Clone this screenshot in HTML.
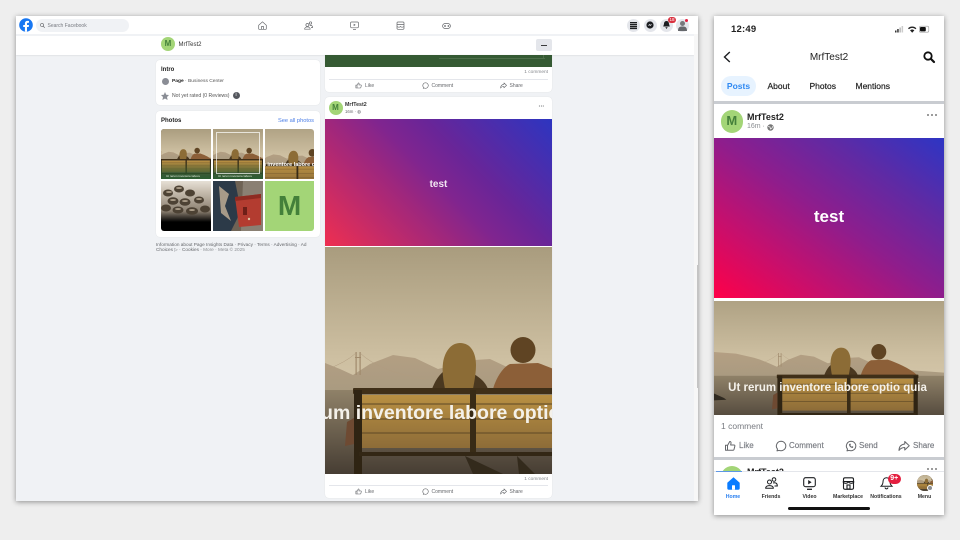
<!DOCTYPE html>
<html><head><meta charset="utf-8"><style>
html,body{margin:0;padding:0}
body{width:960px;height:540px;overflow:hidden;background:#eeeeee;position:relative;font-family:"Liberation Sans",sans-serif}
.a{position:absolute}
#d,#m{position:absolute;left:0;top:0;width:960px;height:540px}
#d{filter:blur(.3px)}
#m{filter:blur(.2px)}
.t{position:absolute;white-space:nowrap;line-height:0}
#d .t{margin-top:.8px}
svg{position:absolute;overflow:visible}
.g{color:#65676b}
.b{font-weight:bold}
.card{position:absolute;background:#fff;border-radius:4px;box-shadow:0 0 1px rgba(0,0,0,.12)}
.av{position:absolute;border-radius:50%;background:#a3d577;color:#44803a;font-weight:bold;text-align:center}
</style></head><body>
<svg width="0" height="0" style="position:absolute"><defs>
<linearGradient id="sky" x1="0" y1="0" x2="0" y2="1"><stop offset="0" stop-color="#a99c7e"/><stop offset=".75" stop-color="#cdbfa1"/><stop offset="1" stop-color="#d3c5a8"/></linearGradient>
<linearGradient id="mt" x1="0" y1="0" x2="0" y2="1"><stop offset="0" stop-color="#b49f83"/><stop offset="1" stop-color="#a89a80"/></linearGradient>
<linearGradient id="gr" x1="0" y1="0" x2="0" y2="1"><stop offset="0" stop-color="#8f8168"/><stop offset="1" stop-color="#463d33"/></linearGradient>
<linearGradient id="sl" x1="0" y1="0" x2="0" y2="1"><stop offset="0" stop-color="#b88f42"/><stop offset="1" stop-color="#8d6c38"/></linearGradient>
<g id="scene">
<rect x="-80" y="0" width="390" height="145" fill="url(#sky)"/>
<path d="M-80 103L-40 106-10 113 0 116 15 122 28 128 45 117 68 108 90 111 113 122 150 113 165 112 182 120 210 127 240 133 310 138V150H-80Z" fill="url(#mt)"/>
<path d="M30.500 105h1.200v23h-1.200zM34.500 105h1.200v23h-1.200zM30 110h6v1h-6z" fill="#a08a6c"/>
<path d="M-40 132Q10 125 31 106M35 106Q55 125 100 132" stroke="#b19c80" stroke-width=".5" fill="none"/>
<rect x="-80" y="143" width="390" height="84" fill="url(#gr)"/>
<path d="M-78 172l18 8 4 3-22 1Z" fill="#2f2920"/>
<path d="M107 142c3-8 7-14 11-17l27 0c8 4 15 9 18 17Z" fill="#4a3820"/>
<path d="M120 142c-2-10-3-18-2-26 2-13 9-20 17-20 11 0 16 10 16 22 0 9-2 18-3 24Z" fill="#8c6c36"/>
<path d="M168 142c3-11 10-22 17-25l28-1c14 5 36 14 49 26Z" fill="#8c5f38"/>
<ellipse cx="198" cy="103" rx="12.500" ry="13" fill="#5f4423"/>
<rect x="28" y="141" width="236" height="6" rx="1" fill="#3f2f18"/>
<rect x="37" y="148" width="108" height="53" fill="url(#sl)"/><rect x="150" y="148" width="106" height="53" fill="url(#sl)"/>
<path d="M37 157h108M150 157h106M37 172h108M150 172h106M37 186h108M150 186h106" stroke="#5d4826" stroke-width="1"/>
<rect x="29" y="143" width="8" height="84" fill="#2f2413"/><rect x="145" y="143" width="6" height="64" fill="#382b16"/><rect x="256" y="143" width="7" height="84" fill="#2f2413"/>
<rect x="34" y="205" width="226" height="4" fill="#332715"/>
<path d="M140 209l38 18h-30ZM192 209l18 18h-16Z" fill="#332a1c"/>
<path d="M22 175l7-4v26l-9 2Z" fill="#6e4a32"/>
</g>
<symbol id="like" viewBox="0 0 24 24" overflow="visible"><path d="M7 10.500v10H3v-10ZM7 11l4.500-8c2 0 3 1.500 2.500 3.500L13.300 10H20c1.300 0 2 1 1.700 2.300l-1.700 6.700c-.3 1-1 1.500-2 1.500H7" fill="none" stroke="currentColor" stroke-width="2" stroke-linejoin="round"/></symbol>
<symbol id="cmt" viewBox="0 0 24 24" overflow="visible"><path d="M12 2.500a9.700 9.500 0 1 1-4 18.200l-4 1 1-3.600A9.500 9.500 0 0 1 12 2.500Z" fill="none" stroke="currentColor" stroke-width="2" stroke-linejoin="round"/></symbol>
<symbol id="shr" viewBox="0 0 24 24" overflow="visible"><path d="M13.500 3l9 8.500-9 8.500v-5C8 15 5 16.500 2 21c0-7 4-12 11.500-13Z" fill="none" stroke="currentColor" stroke-width="2" stroke-linejoin="round"/></symbol>
</defs></svg>

<div id="d">
<!-- desktop window -->
<div class="a" style="left:16px;top:16px;width:682px;height:485px;background:#f0f2f5;box-shadow:0 1px 5px rgba(0,0,0,.4);overflow:hidden"></div>
<div class="a" style="left:16px;top:16px;width:682px;height:18px;background:#fff"></div>
<div class="a" style="left:16px;top:36px;width:678px;height:18.500px;background:#fff;box-shadow:0 1px 1px rgba(0,0,0,.06)"></div>
<div class="a" style="left:694px;top:34px;width:4px;height:467px;background:#f7f7f7"></div>
<div class="a" style="left:696.500px;top:265px;width:1.500px;height:123px;background:#c4c4c4"></div>

<svg style="left:19px;top:18px" width="14" height="14" viewBox="0 0 14 14"><circle cx="7" cy="7" r="6.800" fill="#1877f2"/><path d="M9.700 9l.3-2H8V5.800c0-.6.300-1.100 1.100-1.100h.9V3s-.8-.1-1.500-.1C6.900 2.900 5.900 3.900 5.900 5.500V7H4.200v2h1.700v4.800h2.100V9Z" fill="#fff"/></svg>
<div class="a" style="left:36px;top:19px;width:93px;height:13px;border-radius:7px;background:#f0f2f5"></div>
<svg style="left:40px;top:23px" width="5" height="5" viewBox="0 0 10 10"><circle cx="4" cy="4" r="3.200" fill="none" stroke="#65676b" stroke-width="1.300"/><path d="M6.500 6.500L9.500 9.500" stroke="#65676b" stroke-width="1.300"/></svg>
<div class="t g" style="left:47.500px;top:25px;font-size:5px;color:#777a80">Search Facebook</div>

<!-- top nav icons -->
<svg style="left:258px;top:21px" width="9" height="9" viewBox="0 0 9 9" fill="none" stroke="#65676b" stroke-width=".7"><path d="M.7 4.300L4.500.8l3.800 3.500v3.400a.6.600 0 0 1-.6.600H1.300a.6.600 0 0 1-.6-.6Z"/><path d="M3.400 8.200V5.600h2.200v2.600"/></svg>
<svg style="left:304px;top:21px" width="9" height="9" viewBox="0 0 9 9" fill="none" stroke="#65676b" stroke-width=".7"><circle cx="3.400" cy="4" r="1.500"/><circle cx="6.500" cy="2" r="1.200"/><path d="M.6 8.200c0-3 5.600-3 5.600 0ZM5.800 4.500c1.500-.5 2.900.3 2.800 2H7"/></svg>
<svg style="left:349.500px;top:21px" width="9" height="9" viewBox="0 0 9 9" fill="none" stroke="#65676b" stroke-width=".7"><rect x=".6" y="1" width="7.800" height="5.800" rx="1"/><path d="M3 8.400h3" /><path d="M3.700 2.700l2 1.200-2 1.200Z" fill="#65676b" stroke="none"/></svg>
<svg style="left:395.500px;top:21px" width="9" height="9" viewBox="0 0 9 9" fill="none" stroke="#65676b" stroke-width=".7"><rect x="1" y="1" width="7" height="7.300" rx="1"/><path d="M1 3.500h7M1 5.500c1.500 1 2.500 1 3.500 0 1 1 2 1 3.500 0"/></svg>
<svg style="left:441.500px;top:21.500px" width="9" height="8" viewBox="0 0 9 8" fill="none" stroke="#65676b" stroke-width=".7"><rect x=".6" y="1.500" width="7.800" height="5" rx="2.500"/><path d="M2 4h2M3 3v2"/><circle cx="6.400" cy="4" r=".5" fill="#65676b"/></svg>

<!-- right top circles -->
<div class="a" style="left:627px;top:18.500px;width:13px;height:13px;border-radius:50%;background:#e4e6eb"></div>
<div class="a" style="left:643.500px;top:18.500px;width:13px;height:13px;border-radius:50%;background:#e4e6eb"></div>
<div class="a" style="left:659.500px;top:18.500px;width:13px;height:13px;border-radius:50%;background:#e4e6eb"></div>
<div class="a" style="left:676px;top:18.500px;width:13px;height:13px;border-radius:50%;background:#e4e6eb"></div>
<svg style="left:630px;top:21.500px" width="7" height="7" viewBox="0 0 7 7"><path d="M0 .7h7M0 2.700h7M0 4.700h7M0 6.500h7" stroke="#1c1e21" stroke-width="1.300"/></svg>
<svg style="left:646px;top:21px" width="8" height="8" viewBox="0 0 8 8"><circle cx="4" cy="4" r="3.600" fill="#1c1e21"/><path d="M1.800 5L3.400 3l1 .8L6.200 3 4.500 5l-1-.8Z" fill="#e4e6eb"/></svg>
<svg style="left:662.500px;top:21px" width="7" height="8" viewBox="0 0 7 8"><path d="M3.500 0C1.700 0 1 1.500 1 3L.2 5.500h6.600L6 3C6 1.500 5.300 0 3.500 0ZM2.300 6.300h2.400L3.500 8Z" fill="#1c1e21"/></svg>
<svg style="left:677px;top:19px" width="11" height="13" viewBox="0 0 11 13"><circle cx="5.500" cy="4.500" r="2.500" fill="#77797d"/><path d="M1 12c0-4 1.800-4.500 4.500-4.500S10 8 10 12Z" fill="#66686c"/></svg>
<div class="a" style="left:685px;top:19.200px;width:3px;height:3px;border-radius:50%;background:#e41e3f"></div>
<div class="a" style="left:668px;top:16.800px;width:8px;height:6px;border-radius:3px;background:#d9313f;color:#fff;font-size:4.500px;line-height:6px;text-align:center">18</div>

<!-- page header -->
<div class="av" style="left:161px;top:37px;width:14px;height:14px;font-size:8px;line-height:14px">M</div>
<div class="t" style="left:178.500px;top:44.500px;font-size:6px;color:#333">MrfTest2</div>
<div class="a" style="left:536px;top:39px;width:16px;height:12px;border-radius:2px;background:#e4e6eb"></div>
<div class="a" style="left:541px;top:44.500px;width:6px;height:1.200px;background:#3a3b3c"></div>

<!-- intro -->
<div class="card" style="left:156px;top:60px;width:163.500px;height:45px"></div>
<div class="t b" style="left:161px;top:69px;font-size:6px;color:#222">Intro</div>
<div class="a" style="left:161.500px;top:78px;width:7px;height:7px;border-radius:50%;background:#8a8d95"></div>
<div class="t" style="left:172px;top:81px;font-size:4.900px;color:#555"><b style="color:#222">Page</b> · Business Center</div>
<svg style="left:161px;top:91.500px" width="8" height="8" viewBox="0 0 8 8"><path d="M4 0l1.200 2.700 2.800.3-2 2 .6 3L4 6.500 1.400 8 2 5 0 3l2.800-.3Z" fill="#8a8d95"/></svg>
<div class="t" style="left:172px;top:95.500px;font-size:5.100px;color:#555">Not yet rated (0 Reviews)</div>
<div class="a" style="left:232.500px;top:92px;width:7px;height:7px;border-radius:50%;background:#54575e;color:#fff;font-size:5px;line-height:7px;text-align:center">i</div>

<!-- photos -->
<div class="card" style="left:156px;top:111px;width:163.500px;height:126px"></div>
<div class="t b" style="left:161px;top:120px;font-size:6px;color:#222">Photos</div>
<div class="t" style="right:646px;top:120px;font-size:5.700px;color:#4a7de6">See all photos</div>
<div class="a" style="left:161px;top:129px;width:153px;height:102px;border-radius:3px;overflow:hidden;background:#fff">
 <div class="a" style="left:0;top:0;width:50px;height:50px;overflow:hidden;background:#463d33"><svg style="left:-25.300px;top:-1.200px" width="85.800" height="49.940" viewBox="-80 0 390 227"><use href="#scene"/></svg><div class="a" style="left:0;top:33px;width:50px;height:17px;background:linear-gradient(rgba(50,110,50,0),rgba(40,100,50,.85))"></div><div class="t" style="left:5px;top:46px;font-size:3px;color:#e6efe0">Ut rerum inventore labore</div></div>
 <div class="a" style="left:52px;top:0;width:50px;height:50px;overflow:hidden;background:#463d33"><svg style="left:-25.300px;top:-1.200px" width="85.800" height="49.940" viewBox="-80 0 390 227"><use href="#scene"/></svg><div class="a" style="left:0;top:33px;width:50px;height:17px;background:linear-gradient(rgba(50,110,50,0),rgba(40,100,50,.85))"></div><div class="a" style="left:3px;top:3px;width:44px;height:42px;border:.7px solid rgba(255,255,255,.7);box-sizing:border-box"></div><div class="t" style="left:5px;top:46px;font-size:3px;color:#e6efe0">Ut rerum inventore labore</div></div>
 <div class="a" style="left:103.500px;top:0;width:50px;height:50px;overflow:hidden"><svg style="left:-36px;top:-7px" width="117" height="68.100" viewBox="-80 0 390 227"><use href="#scene"/></svg><div class="t b" style="left:-9px;top:35.500px;font-size:5.500px;color:#fff">rum inventore labore optio</div></div>
 <div class="a" style="left:0;top:51.500px;width:50px;height:50.500px;overflow:hidden;background:linear-gradient(#e6e0d6 0,#c9bfb1 20%,#8d8172 60%,#000 82%)">
  <svg style="left:0;top:0" width="50" height="50" viewBox="0 0 50 50"><g fill="#4d4234"><ellipse cx="7" cy="12" rx="5" ry="3.500"/><ellipse cx="18" cy="8" rx="5" ry="3.500"/><ellipse cx="29" cy="12" rx="5" ry="3.500"/><ellipse cx="12" cy="20" rx="5.500" ry="3.800"/><ellipse cx="24" cy="21" rx="5.500" ry="3.800"/><ellipse cx="38" cy="19" rx="5" ry="3.500"/><ellipse cx="5" cy="27" rx="5" ry="3.500"/><ellipse cx="17" cy="29" rx="5.500" ry="3.500"/><ellipse cx="31" cy="30" rx="6" ry="3.800"/><ellipse cx="44" cy="28" rx="5" ry="3.500"/></g><g fill="#a89a86"><ellipse cx="8" cy="11" rx="3" ry="1"/><ellipse cx="18" cy="7" rx="3" ry="1"/><ellipse cx="12" cy="19" rx="3" ry="1"/><ellipse cx="24" cy="20" rx="3" ry="1"/><ellipse cx="31" cy="29" rx="3" ry="1"/><ellipse cx="17" cy="28" rx="3" ry="1"/><ellipse cx="38" cy="18" rx="3" ry="1"/></g></svg>
 </div>
 <div class="a" style="left:52px;top:51.500px;width:50px;height:50.500px;overflow:hidden;background:#6f6355">
  <svg style="left:0;top:0" width="50" height="50" viewBox="0 0 50 50"><path d="M0 0h22L28 30 18 50H0Z" fill="#2c3a48"/><path d="M6 5l10 8-4 12 6 15-10-8Z" fill="#a79a88"/><path d="M30 0h20v50H28Z" fill="#8a8073"/><path d="M22 16l26-3v31l-22 2Z" fill="#b33c30"/><path d="M22 16l26-3v4l-26 3Z" fill="#8e2b22"/><rect x="30" y="26" width="4" height="8" fill="#6e1f18"/><circle cx="36" cy="38" r="1.200" fill="#e0c0a0"/></svg>
 </div>
 <div class="a" style="left:103.500px;top:51.500px;width:50px;height:50.500px;background:#a3d577;color:#44803a;font-weight:bold;font-size:28px;line-height:50px;text-align:center">M</div>
</div>
<div class="t" style="left:156px;top:244px;font-size:4.700px;color:#65676b">Information about Page Insights Data · Privacy · Terms · Advertising · Ad</div>
<div class="t" style="left:156px;top:249.500px;font-size:4.700px;color:#65676b">Choices ▷ · Cookies · <span style="color:#8a8d91">More · Meta © 2025</span></div>

<!-- post 1 fragment -->
<div class="card" style="left:325px;top:54.500px;width:227px;height:37.500px;border-radius:0 0 4px 4px"></div>
<div class="a" style="left:325px;top:54.500px;width:227px;height:12.500px;background:#355a33"><div class="a" style="left:114px;top:3.500px;width:106px;height:1px;background:#4d6e4a"></div><div class="a" style="left:218px;top:0;width:1px;height:4px;background:#4d6e4a"></div></div>
<div class="t g" style="right:412px;top:72.500px;font-size:4.800px;color:#85878c">1 comment</div>
<div class="a" style="left:329px;top:78.500px;width:219px;height:.7px;background:#e4e6eb"></div>
<svg class="g" style="left:355px;top:81.500px" width="7" height="7"><use href="#like"/></svg>
<div class="t" style="left:365px;top:85px;font-size:5px;color:#65676b">Like</div>
<svg class="g" style="left:421.500px;top:81.500px" width="7" height="7"><use href="#cmt"/></svg>
<div class="t" style="left:431.500px;top:85px;font-size:5px;color:#65676b">Comment</div>
<svg class="g" style="left:499.500px;top:81.500px" width="7" height="7"><use href="#shr"/></svg>
<div class="t" style="left:509.500px;top:85px;font-size:5px;color:#65676b">Share</div>

<!-- post 2 -->
<div class="card" style="left:325px;top:97px;width:227px;height:401px"></div>
<div class="av" style="left:328.500px;top:101px;width:14px;height:14px;font-size:8px;line-height:14px">M</div>
<div class="t b" style="left:345px;top:104.500px;font-size:5.300px;color:#333">MrfTest2</div>
<div class="t g" style="left:345px;top:111.500px;font-size:4.300px">16m · ◍</div>
<div class="t g b" style="left:538.500px;top:106.500px;font-size:6.500px;letter-spacing:-.2px">···</div>
<div class="a" style="left:325px;top:118.500px;width:227px;height:127.500px;background:linear-gradient(45deg,#ef2f50 0,#a0277c 36%,#80258f 50%,#692598 64%,#2d35c0 100%)"></div>
<div class="t" style="left:325px;width:227px;text-align:center;top:184px;font-size:10px;font-weight:bold;color:#f2e6f2">test</div>
<div class="a" style="left:325px;top:247px;width:227px;height:226.500px;overflow:hidden;background:#a99c7e">
 <svg style="left:-80px;top:0" width="390" height="227" viewBox="-80 0 390 227"><use href="#scene"/></svg>
 <div class="t b" style="left:-100px;width:425px;text-align:center;top:165px;font-size:19.500px;color:#f4f1ea">Ut rerum inventore labore optio quia</div>
</div>
<div class="t g" style="right:412px;top:479px;font-size:4.800px;color:#85878c">1 comment</div>
<div class="a" style="left:329px;top:485px;width:219px;height:.7px;background:#e4e6eb"></div>
<svg class="g" style="left:355px;top:488px" width="7" height="7"><use href="#like"/></svg>
<div class="t" style="left:365px;top:491.500px;font-size:5px;color:#65676b">Like</div>
<svg class="g" style="left:421.500px;top:488px" width="7" height="7"><use href="#cmt"/></svg>
<div class="t" style="left:431.500px;top:491.500px;font-size:5px;color:#65676b">Comment</div>
<svg class="g" style="left:499.500px;top:488px" width="7" height="7"><use href="#shr"/></svg>
<div class="t" style="left:509.500px;top:491.500px;font-size:5px;color:#65676b">Share</div>
</div>

<div id="m">
<!-- phone -->
<div class="a" style="left:714px;top:16px;width:230px;height:499px;background:#fff;box-shadow:0 1px 5px rgba(0,0,0,.4)"></div>
<div class="t" style="left:731px;top:29.500px;font-size:9.500px;font-weight:bold;color:#222;letter-spacing:.2px">12:49</div>
<svg style="left:895px;top:25px" width="30" height="9" viewBox="0 0 30 9"><rect x="0" y="5.500" width="1.500" height="2" fill="#333"/><rect x="2.200" y="4" width="1.500" height="3.500" fill="#333"/><rect x="4.400" y="2.500" width="1.500" height="5" fill="#bbb"/><rect x="6.600" y="1" width="1.500" height="6.500" fill="#ccc"/><path d="M13 3.200c2.400-2.300 6-2.300 8.400 0l-1 1c-1.900-1.700-4.500-1.700-6.400 0ZM15 5.300c1.300-1.100 3.100-1.100 4.400 0l-2.200 2.500Z" fill="#222"/><rect x="24.300" y="1.200" width="9.500" height="6" rx="1.500" fill="none" stroke="#999" stroke-width=".6"/><rect x="25" y="2" width="5.800" height="4.400" rx="1" fill="#111"/></svg>
<svg style="left:723px;top:51px" width="8" height="12" viewBox="0 0 8 12"><path d="M6.800 1L1.500 6l5.300 5" fill="none" stroke="#1c1e21" stroke-width="1.400"/></svg>
<div class="t" style="left:714px;width:230px;text-align:center;top:57.500px;font-size:10px;color:#222">MrfTest2</div>
<svg style="left:922.500px;top:50.500px" width="12" height="12" viewBox="0 0 12 12"><circle cx="5" cy="5" r="3.700" fill="none" stroke="#111" stroke-width="1.800"/><path d="M8 8l3 3" stroke="#111" stroke-width="2.200" stroke-linecap="round"/></svg>
<div class="a" style="left:721px;top:76px;width:35px;height:20px;border-radius:10px;background:#e7f3ff"></div>
<div class="t" style="left:721px;width:35px;text-align:center;top:86px;font-size:8.500px;font-weight:bold;color:#2d88f2">Posts</div>
<div class="t" style="left:767.500px;top:86px;font-size:8.500px;color:#222;-webkit-text-stroke:.2px #222">About</div>
<div class="t" style="left:809.500px;top:86px;font-size:8.500px;color:#222;-webkit-text-stroke:.2px #222">Photos</div>
<div class="t" style="left:855.500px;top:86px;font-size:8.500px;color:#222;-webkit-text-stroke:.2px #222">Mentions</div>
<div class="a" style="left:714px;top:101px;width:230px;height:2.500px;background:#c9ccd1"></div>
<div class="av" style="left:720.500px;top:110px;width:22.500px;height:22.500px;font-size:13px;line-height:22.500px">M</div>
<div class="t b" style="left:747px;top:116.500px;font-size:9px;color:#222">MrfTest2</div>
<div class="t g" style="left:747px;top:127px;font-size:7px;color:#8a8d91">16m ·</div>
<svg style="left:767px;top:123.500px" width="7" height="7" viewBox="0 0 7 7"><circle cx="3.500" cy="3.500" r="3.200" fill="#777"/><path d="M1 2.500l2 .5.500 2L5 4l1-2" stroke="#eee" stroke-width=".8" fill="none"/></svg>
<svg style="left:927px;top:114px" width="10" height="2" viewBox="0 0 10 2"><circle cx="1" cy="1" r=".9" fill="#555"/><circle cx="5" cy="1" r=".9" fill="#555"/><circle cx="9" cy="1" r=".9" fill="#555"/></svg>
<div class="a" style="left:714px;top:138px;width:230px;height:159.500px;background:linear-gradient(to top right,#ff0048 0,#c80f6c 25%,#8f1d8c 50%,#5f2aa4 75%,#2d35c4 100%)"></div>
<div class="t" style="left:714px;width:230px;text-align:center;top:217px;font-size:17px;font-weight:bold;color:#fff">test</div>
<div class="a" style="left:714px;top:301px;width:230px;height:114px;overflow:hidden;background:#a99c7e">
 <svg style="left:-2px;top:-11px" width="234" height="136.200" viewBox="-80 0 390 227"><use href="#scene"/></svg>
 <div class="t b" style="left:0;width:227px;text-align:center;top:87px;font-size:11.500px;color:#f4f1ea">Ut rerum inventore labore optio quia</div>
</div>
<div class="t" style="left:721px;top:426px;font-size:8.500px;color:#777a80">1 comment</div>
<svg class="g" style="left:724px;top:440px;color:#65676b" width="12" height="12"><use href="#like"/></svg>
<div class="t" style="left:739px;top:446px;font-size:8px;color:#777a80;-webkit-text-stroke:.15px #777a80">Like</div>
<svg style="left:774.500px;top:440px;color:#65676b" width="12" height="12"><use href="#cmt"/></svg>
<div class="t" style="left:789px;top:446px;font-size:8px;color:#777a80;-webkit-text-stroke:.15px #777a80">Comment</div>
<svg style="left:844.500px;top:440px;color:#65676b" width="12" height="12"><use href="#cmt"/></svg>
<svg style="left:847.500px;top:443px" width="6" height="6" viewBox="0 0 6 6"><path d="M1 1.200c0 2 1.500 3.500 3.800 3.800l.6-1.200-1.200-.7-.5.500C3 3.300 2.600 2.800 2.400 2.100l.5-.5L2.200.4Z" fill="#65676b"/></svg>
<div class="t" style="left:859px;top:446px;font-size:8px;color:#777a80;-webkit-text-stroke:.15px #777a80">Send</div>
<svg style="left:898px;top:440px;color:#65676b" width="12" height="12"><use href="#shr"/></svg>
<div class="t" style="left:913px;top:446px;font-size:8px;color:#777a80;-webkit-text-stroke:.15px #777a80">Share</div>
<div class="a" style="left:714px;top:457px;width:230px;height:2.500px;background:#c9ccd1"></div>
<div class="a" style="left:714px;top:459.500px;width:230px;height:11.500px;overflow:hidden">
 <div class="av" style="left:6.500px;top:6px;width:22.500px;height:22.500px"></div>
 <div class="t b" style="left:33px;top:12px;font-size:9px;color:#222">MrfTest2</div>
 <svg style="left:213px;top:8px" width="10" height="2" viewBox="0 0 10 2"><circle cx="1" cy="1" r=".9" fill="#555"/><circle cx="5" cy="1" r=".9" fill="#555"/><circle cx="9" cy="1" r=".9" fill="#555"/></svg>
</div>
<div class="a" style="left:714px;top:471px;width:230px;height:44px;background:#fff;border-top:.5px solid #e4e6eb;box-sizing:border-box"></div>
<div class="a" style="left:716px;top:470.700px;width:26px;height:.8px;background:#5d97e6"></div>
<!-- tab icons -->
<svg style="left:726.500px;top:476.500px" width="13" height="13" viewBox="0 0 13 13"><path d="M6.500.3L12.700 5.800V11.200a1.500 1.500 0 0 1-1.500 1.500H1.800A1.500 1.500 0 0 1 .3 11.200V5.800Z" fill="#0a7cff"/><rect x="5" y="8.300" width="3" height="4.400" rx=".5" fill="#fff"/></svg>
<svg style="left:765px;top:477px" width="13" height="12" viewBox="0 0 13 12" fill="none" stroke="#1c1e21" stroke-width="1"><circle cx="4.500" cy="5" r="2"/><circle cx="9" cy="2.500" r="1.800"/><path d="M.7 11.200c0-3.500 7.600-3.500 7.600 0ZM8 6c2-.7 4.400 0 4.300 3H9.500"/></svg>
<svg style="left:803px;top:477px" width="13" height="13" viewBox="0 0 13 13" fill="none" stroke="#1c1e21" stroke-width="1.100"><rect x=".7" y=".7" width="11.600" height="9" rx="2"/><path d="M4 12.300h5" stroke-width="1.300"/><path d="M5.200 3l3.400 2.200-3.400 2.200Z" fill="#1c1e21" stroke="none"/></svg>
<svg style="left:841.500px;top:476.500px" width="13" height="13" viewBox="0 0 13 13" fill="none" stroke="#1c1e21" stroke-width="1.100"><rect x="1.500" y=".8" width="10" height="11.500" rx="1.500"/><path d="M.8 4.500h11.400M1 5c1.500 1.800 3.700 1.800 5.500 0 1.800 1.800 4 1.800 5.500 0"/><rect x="5" y="8" width="3" height="4"/></svg>
<svg style="left:880px;top:477px" width="13" height="13" viewBox="0 0 13 13" fill="none" stroke="#1c1e21" stroke-width="1"><path d="M6.500.8C4 .8 3 2.700 3 4.700c0 2-.8 3.300-2 4.500h11c-1.200-1.200-2-2.500-2-4.500 0-2-1-3.900-3.500-3.900ZM5 10.500c.4 1.800 2.600 1.800 3 0"/></svg>
<div class="a" style="left:888px;top:474px;width:12.500px;height:9.500px;border-radius:5px;background:#e41e3f;color:#fff;font-size:7px;font-weight:bold;line-height:9.500px;text-align:center">9+</div>
<div class="a" style="left:917px;top:475px;width:15.500px;height:15.500px;border-radius:50%;overflow:hidden;background:#5a4a38"><svg style="left:-12px;top:-6px" width="39" height="22.700" viewBox="-80 0 390 227"><use href="#scene"/></svg></div>
<div class="a" style="left:926.500px;top:484.500px;width:6.500px;height:6.500px;border-radius:50%;background:#8a8d91;border:.5px solid #fff;box-sizing:border-box"></div>
<div class="t b" style="left:713px;width:40px;text-align:center;top:496.500px;font-size:5.200px;color:#2b80f0">Home</div>
<div class="t b" style="left:751px;width:40px;text-align:center;top:496.500px;font-size:5.200px;color:#333">Friends</div>
<div class="t b" style="left:789.500px;width:40px;text-align:center;top:496.500px;font-size:5.200px;color:#333">Video</div>
<div class="t b" style="left:828px;width:40px;text-align:center;top:496.500px;font-size:5.200px;color:#333">Marketplace</div>
<div class="t b" style="left:866px;width:40px;text-align:center;top:496.500px;font-size:5.200px;color:#333">Notifications</div>
<div class="t b" style="left:904.500px;width:40px;text-align:center;top:496.500px;font-size:5.200px;color:#333">Menu</div>
<div class="a" style="left:788px;top:507px;width:82px;height:2.500px;border-radius:2px;background:#111"></div>
</div>
</body></html>
